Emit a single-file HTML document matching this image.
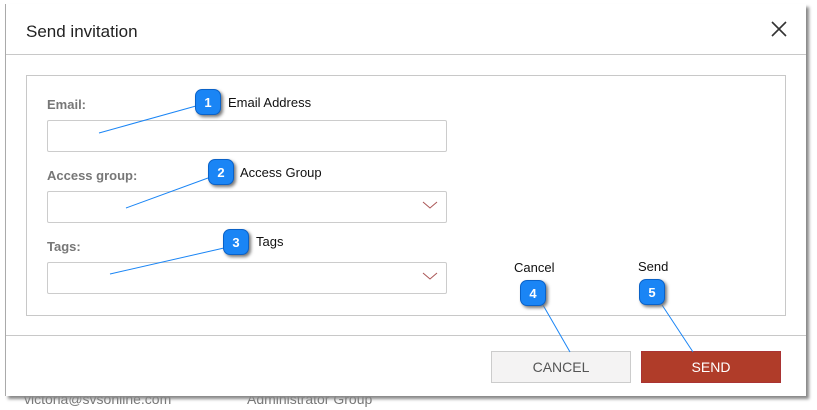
<html><head><style>
body{margin:0;width:817px;height:410px;background:#fff;position:relative;overflow:hidden;font-family:"Liberation Sans",sans-serif}
.bg{position:absolute;top:391px;color:#777;font-size:14px}
.dlg{position:absolute;left:5px;top:4px;width:800px;height:392px;background:#fff;border-left:1px solid #aaa;box-shadow:3px 3px 3px #888}
.title{position:absolute;left:20px;top:18px;font-size:17px;color:#222}
.hl{position:absolute;left:0;right:0;height:1px;background:#c8c8c8}
.box{position:absolute;left:20px;top:71px;width:758px;height:239px;border:1px solid #c8c8c8}
.lbl{position:absolute;left:41px;font-size:13px;font-weight:bold;color:#777}
.inp{position:absolute;left:41px;width:398px;height:30px;border:1px solid #ccc;border-radius:2px}
.btn{position:absolute;top:347px;height:30px;font-size:14px;text-align:center;line-height:30px}
.co{position:absolute;width:26px;height:26px;border-radius:7px;background:#1a85f5;color:#fff;font-weight:bold;font-size:13px;text-align:center;line-height:26px;box-shadow:2px 2px 3px #777;border:1px solid #0a62c8;box-sizing:border-box}
.ct{position:absolute;font-size:13px;color:#111}
</style></head><body>
<div class="bg" style="left:24px">victoria@svsonline.com</div>
<div class="bg" style="left:247px">Administrator Group</div>
<div class="dlg">
<div class="title">Send invitation</div>
<svg style="position:absolute;left:764px;top:16px" width="18" height="18"><path d="M2 2L16 16M16 2L2 16" stroke="#333" stroke-width="1.6"/></svg>
<div class="hl" style="top:50px"></div>
<div class="box"></div>
<div class="lbl" style="top:93px">Email:</div>
<div class="inp" style="top:116px"></div>
<div class="lbl" style="top:164px">Access group:</div>
<div class="inp" style="top:187px"></div>
<div class="lbl" style="top:235px">Tags:</div>
<div class="inp" style="top:258px"></div>
<div class="hl" style="top:331px"></div>
<div class="btn" style="left:485px;width:138px;background:#f4f3f3;border:1px solid #ccc;color:#555">CANCEL</div>
<div class="btn" style="left:635px;width:138px;background:#b03c29;border:1px solid #a33;color:#fff">SEND</div>
</div>
<svg style="position:absolute;left:0;top:0" width="817" height="410">
<path d="M423 202l7 6 7-6M423 273l7 6 7-6" stroke="#a55" fill="none" stroke-width="1"/>
<g stroke="#1a85f5" stroke-width="1"><line x1="196" y1="106" x2="99" y2="133"/><line x1="208" y1="178" x2="126" y2="208"/><line x1="224" y1="248" x2="110" y2="274"/><line x1="543" y1="305" x2="570" y2="352"/><line x1="662" y1="305" x2="693" y2="352"/></g>
</svg>
<div class="co" style="left:195px;top:89px">1</div><div class="ct" style="left:228px;top:95px">Email Address</div>
<div class="co" style="left:208px;top:159px">2</div><div class="ct" style="left:240px;top:165px">Access Group</div>
<div class="co" style="left:223px;top:229px">3</div><div class="ct" style="left:256px;top:234px">Tags</div>
<div class="co" style="left:520px;top:280px">4</div><div class="ct" style="left:514px;top:260px">Cancel</div>
<div class="co" style="left:639px;top:279px">5</div><div class="ct" style="left:638px;top:259px">Send</div>
</body></html>
